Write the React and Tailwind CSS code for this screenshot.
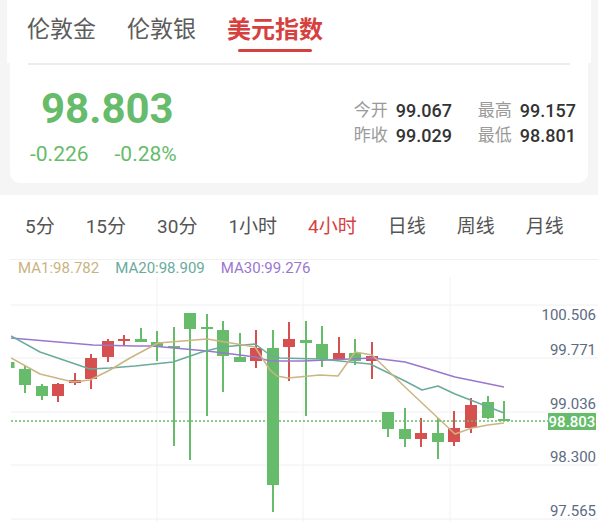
import React from 'react'

const GREEN = '#67bc6b'
const RED = '#d65050'

// [cx, bodyTop, bodyBottom, wickTop, wickBottom, up]
const candles = [
  [8.5, 362, 368, 360, 370, false],
  [25, 369, 385, 366, 393, false],
  [42, 386, 396, 384, 400, false],
  [58, 384, 396, 383, 402, true],
  [75, 380, 383, 373, 385, true],
  [91, 358, 379, 354, 389, true],
  [108, 341, 357, 339, 362, true],
  [124, 339, 341, 335, 346, true],
  [141, 339, 342, 328, 342, false],
  [157, 342, 347, 331, 361, false],
  [174, 346, 348, 327, 446, false],
  [190, 313, 329, 313, 460, false],
  [207, 327, 329, 314, 416, false],
  [223, 330, 356, 321, 392, false],
  [240, 357, 362, 333, 362, false],
  [256, 348, 361, 330, 368, true],
  [273, 348, 485, 330, 512, false],
  [289, 339, 347, 322, 381, true],
  [306, 340, 343, 321, 416, false],
  [322, 344, 359, 326, 367, false],
  [339, 353, 359, 337, 359, true],
  [355, 353, 361, 339, 365, false],
  [372, 356, 361, 342, 379, true],
  [388, 412, 429, 412, 437, false],
  [405, 429, 439, 408, 447, false],
  [421, 433, 439, 418, 447, true],
  [438, 433, 442, 418, 459, false],
  [454, 428, 442, 411, 446, true],
  [471, 405, 428, 398, 433, true],
  [488, 402, 418, 396, 419, false],
  [504, 419, 421, 401, 421, false],
]

const ma30 = '11,338 93,345 135,346 152,346 207,351 240,355 255,357 270,361 303,361 373,358 405,362 422,367 455,377 504,387'
const ma20 = '11,336 40,352 90,369 110,368 135,366 173,362 202,352 222,347 255,344 270,355 280,358 320,359 370,364 405,381 422,390 438,386 455,394 504,413'
const ma1 = '11,358 40,374 73,382 90,380 110,370 130,358 158,343 207,339 255,347 270,370 277,376 288,378 320,375 338,376 355,352 372,355 405,387 455,434 472,428 488,425 504,423'

const axis = [
  ['100.506', 320],
  ['99.771', 355],
  ['99.036', 409],
  ['98.300', 462],
  ['97.565', 516],
]

const tabs = ['伦敦金', '伦敦银', '美元指数']
const periods = ['5分', '15分', '30分', '1小时', '4小时', '日线', '周线', '月线']

const stats = [
  ['今开', '99.067'],
  ['最高', '99.157'],
  ['昨收', '99.029'],
  ['最低', '98.801'],
]

const Chart = () => (
  <svg width="598" height="245" viewBox="0 277 598 245" className="block">
    <defs>
      <clipPath id="plot">
        <rect x="11" y="259" width="587" height="263" />
      </clipPath>
    </defs>
    {[305, 358, 412, 465, 519].map((y) => (
      <line key={y} x1="11" x2="598" y1={y} y2={y} stroke="#f0f0f0" strokeWidth="1" />
    ))}
    {[157, 303, 450].map((x) => (
      <line key={x} x1={x} x2={x} y1="259" y2="522" stroke="#f2f2f2" strokeWidth="1" />
    ))}
    <g clipPath="url(#plot)">
      {candles.map(([cx, bt, bb, wt, wb, up], i) => {
        const c = up ? RED : GREEN
        return (
          <g key={i}>
            <rect x={cx - 1} y={wt} width="2" height={wb - wt} fill={c} />
            <rect x={cx - 6} y={bt} width="12" height={Math.max(bb - bt, 2)} fill={c} />
          </g>
        )
      })}
      <polyline points={ma30} fill="none" stroke="#9a77cf" strokeWidth="1.5" strokeLinejoin="round" />
      <polyline points={ma20} fill="none" stroke="#6aab9c" strokeWidth="1.5" strokeLinejoin="round" />
      <polyline points={ma1} fill="none" stroke="#cbb583" strokeWidth="1.5" strokeLinejoin="round" />
    </g>
    <line x1="11" x2="548" y1="421" y2="421" stroke={GREEN} strokeWidth="1.5" strokeDasharray="2 2" />
    {axis.map(([t, y]) => (
      <text key={t} x="596" y={y} textAnchor="end" fontSize="15" fill="#5d6b82" fontFamily="Roboto, sans-serif">
        {t}
      </text>
    ))}
    <rect x="548" y="413" width="48" height="17" fill={GREEN} />
    <text x="572" y="427" textAnchor="middle" fontSize="15" fill="#fff" fontWeight="500" fontFamily="Roboto, sans-serif">
      98.803
    </text>
  </svg>
)

const App = () => {
  return (
    <div className="w-[598px] h-[522px] overflow-hidden bg-[#f5f5f5] font-['Roboto','Noto_Sans_CJK_SC',sans-serif]">
      <div className="mx-[7px] h-[63px] bg-white flex items-start gap-[31px] pl-[20px] pt-[14px]">
        {tabs.map((t, i) => (
          <div key={t} className="flex flex-col items-center">
            <span className={i === 2 ? 'text-[24px] leading-[32px] font-bold text-[#d6413f]' : 'text-[23px] leading-[32px] text-[#5c5c5c]'}>
              {t}
            </span>
            {i === 2 && <span className="mt-[3px] h-[3px] w-[74px] rounded-full bg-[#d6413f]" />}
          </div>
        ))}
      </div>

      <div className="mx-[10px] h-[120px] bg-white rounded-b-[10px]">
        <div className="mx-[18px] h-[2px] bg-[#ececec]" />
        <div className="flex items-start justify-between">
          <div className="pt-[23px]">
            <div className="pl-[31px] text-[42px] leading-[42px] font-bold text-[#67bc6b]">98.803</div>
            <div className="mt-[14px] pl-[20px] flex gap-[26px] text-[21px] leading-[21px] text-[#67bc6b]">
              <span>-0.226</span>
              <span>-0.28%</span>
            </div>
          </div>
          <div className="pt-[37px] pr-[12px] grid grid-cols-[124px_auto] content-start gap-y-[8px] leading-[17px]">
            {stats.map(([k, v]) => (
              <div key={k} className="flex items-center gap-[8px]">
                <span className="text-[17px] text-[#9a9a9a]">{k}</span>
                <span className="text-[18px] text-[#333] font-medium">{v}</span>
              </div>
            ))}
          </div>
        </div>
      </div>

      <div className="mt-[12px] bg-white">
        <div className="h-[64px] flex items-center gap-[31px] pl-[25px] text-[19px]">
          {periods.map((p, i) => (
            <span key={p} className={i === 4 ? 'text-[#d6413f]' : 'text-[#555]'}>{p}</span>
          ))}
        </div>
        <div className="ml-[10px] border-t border-[#f0f0f0] h-[18px] flex items-center gap-[16px] pl-[8px] text-[15px] leading-[15px]">
          <span className="text-[#c9b37f]">MA1:98.782</span>
          <span className="text-[#6aab9c]">MA20:98.909</span>
          <span className="text-[#9a77cf]">MA30:99.276</span>
        </div>
        <Chart />
      </div>
    </div>
  )
}

export default App
